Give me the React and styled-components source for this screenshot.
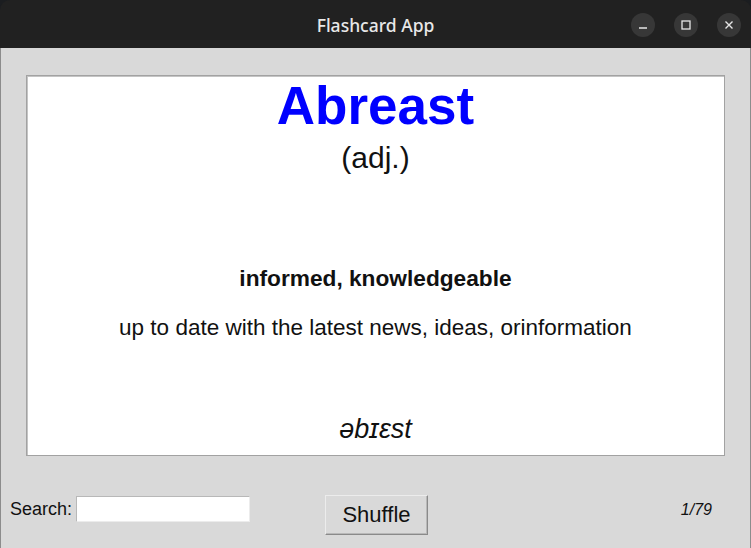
import React from 'react';
import styled, { createGlobalStyle } from 'styled-components';

const GlobalStyle = createGlobalStyle`
  html, body {
    margin: 0;
    padding: 0;
    background: #1b1d20;
  }
  * { box-sizing: border-box; }
`;

const card = {
  word: 'Abreast',
  pos: '(adj.)',
  meaning: 'informed, knowledgeable',
  example: 'up to date with the latest news, ideas, orinformation',
  phonetic: 'əbɪɛst',
};

const App = () => {
  return (
    <Window>
      <GlobalStyle />
      <TitleBar>
        <Title>Flashcard App</Title>
        <Controls>
          <CtrlBtn>
            <svg width="10" height="10" viewBox="0 0 10 10">
              <line x1="1" y1="8" x2="9" y2="8" stroke="#e6e6e6" strokeWidth="1.3" />
            </svg>
          </CtrlBtn>
          <CtrlBtn>
            <svg width="10" height="10" viewBox="0 0 10 10">
              <rect x="1" y="1" width="8" height="8" fill="none" stroke="#e6e6e6" strokeWidth="1.3" />
            </svg>
          </CtrlBtn>
          <CtrlBtn>
            <svg width="10" height="10" viewBox="0 0 10 10">
              <path d="M1.5 1.5 L8.5 8.5 M8.5 1.5 L1.5 8.5" stroke="#e6e6e6" strokeWidth="1.4" />
            </svg>
          </CtrlBtn>
        </Controls>
      </TitleBar>
      <Body>
        <Card>
          <Word>{card.word}</Word>
          <Pos>{card.pos}</Pos>
          <Meaning>{card.meaning}</Meaning>
          <Example>{card.example}</Example>
          <Phonetic>{card.phonetic}</Phonetic>
        </Card>
        <Footer>
          <SearchBox>
            <Label>Search:</Label>
            <SearchInput type="text" />
          </SearchBox>
          <ShuffleBtn>Shuffle</ShuffleBtn>
          <Counter>1/79</Counter>
        </Footer>
      </Body>
    </Window>
  );
};

const Window = styled.div`
  width: 751px;
  height: 548px;
  display: flex;
  flex-direction: column;
  border-radius: 10px 10px 0 0;
  overflow: hidden;
`;

const TitleBar = styled.div`
  height: 48px;
  flex: none;
  background: #212121;
  display: flex;
  align-items: center;
  justify-content: center;
  position: relative;
`;

const Title = styled.div`
  color: #e8e8e8;
  font-family: 'Noto Sans', 'DejaVu Sans', sans-serif;
  font-size: 17.5px;
  font-weight: 500;
  margin-top: 1px;
`;

const Controls = styled.div`
  position: absolute;
  right: 10px;
  top: 13px;
  display: flex;
  gap: 19px;
`;

const CtrlBtn = styled.div`
  width: 24px;
  height: 24px;
  border-radius: 50%;
  background: #373737;
  display: flex;
  align-items: center;
  justify-content: center;
`;

const Body = styled.div`
  flex: 1;
  background: #d9d9d9;
  border-left: 1px solid #8c8c8c;
  border-right: 1px solid #8c8c8c;
  padding: 27px 25px 0 25px;
  display: flex;
  flex-direction: column;
  font-family: 'Liberation Sans', Arial, sans-serif;
`;

const Card = styled.div`
  height: 381px;
  background: #ffffff;
  border: 1px solid #a2a2a2;
  box-shadow: inset 1px 1px 0 #c4c4c4;
  display: flex;
  flex-direction: column;
  align-items: center;
  color: #111;
`;

const Word = styled.div`
  color: #0000ff;
  font-weight: bold;
  font-size: 53px;
  line-height: 58px;
  margin-top: 1px;
`;

const Pos = styled.div`
  font-size: 30px;
  line-height: 34px;
  margin-top: 6px;
`;

const Meaning = styled.div`
  font-weight: bold;
  font-size: 22.7px;
  line-height: 27px;
  margin-top: 90px;
`;

const Example = styled.div`
  font-size: 22.5px;
  line-height: 26px;
  margin-top: 23px;
`;

const Phonetic = styled.div`
  font-style: italic;
  font-size: 27px;
  line-height: 30px;
  margin-top: 73px;
`;

const Footer = styled.div`
  flex: 1;
  display: flex;
  align-items: center;
  padding: 22px 0 0 0;
  margin-left: -16px;
`;

const SearchBox = styled.div`
  display: flex;
  align-items: center;
  gap: 4px;
  width: 315px;
  margin-bottom: 8px;
`;

const Label = styled.span`
  font-size: 18px;
  color: #111;
`;

const SearchInput = styled.input`
  width: 174px;
  height: 26px;
  background: #fff;
  border: 1px solid #b8b8b8;
  border-right-color: #ececec;
  border-bottom-color: #ececec;
  outline: none;
  padding: 0;
`;

const ShuffleBtn = styled.button`
  width: 103px;
  height: 40px;
  margin-top: 4px;
  background: #d9d9d9;
  border: 1px solid #ececec;
  border-right-color: #8a8a8a;
  border-bottom-color: #8a8a8a;
  box-shadow: inset -1px -1px 0 #b8b8b8;
  font-family: 'Liberation Sans', Arial, sans-serif;
  font-size: 22px;
  color: #111;
  padding: 0;
`;

const Counter = styled.span`
  margin-left: auto;
  margin-right: 13px;
  margin-bottom: 6px;
  font-size: 16px;
  font-style: italic;
  color: #111;
`;

export default App;
